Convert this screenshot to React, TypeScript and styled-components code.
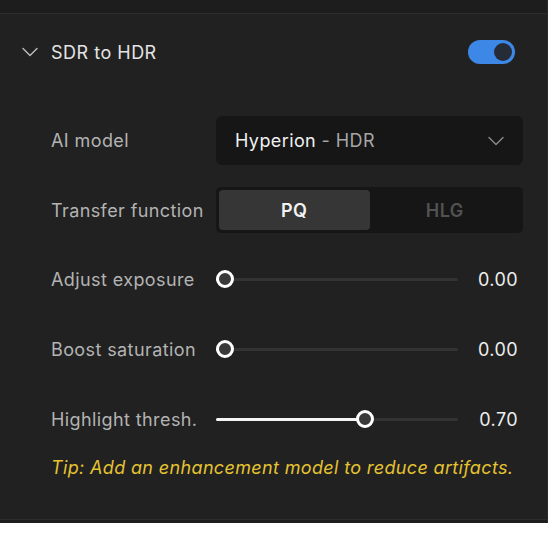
import styled, { createGlobalStyle } from "styled-components";

const GlobalStyle = createGlobalStyle`
  html, body {
    margin: 0;
    padding: 0;
    background: #ffffff;
  }
  body {
    font-family: Inter, "Noto Sans", "Liberation Sans", sans-serif;
  }
`;

type SliderSpec = {
  label: string;
  value: number;
  min: number;
  max: number;
};

const sliders: SliderSpec[] = [
  { label: "Adjust exposure", value: 0, min: 0, max: 1 },
  { label: "Boost saturation", value: 0, min: 0, max: 1 },
  { label: "Highlight thresh.", value: 0.7, min: 0.2, max: 1 },
];

const THUMB = 18;

const App = () => {
  return (
    <>
      <GlobalStyle />
      <Panel>
        <TopStrip />
        <Section>
          <Header>
            <HeaderLeft>
              <Chevron width="16" height="10" viewBox="0 0 16 10" $color="#bdbdbd">
                <path d="M1 1.5 L8 8.5 L15 1.5" />
              </Chevron>
              <Title>SDR to HDR</Title>
            </HeaderLeft>
            <Toggle $on>
              <Knob />
            </Toggle>
          </Header>

          <Rows>
            <Row $h={49}>
              <Label>AI model</Label>
              <Select>
                <SelectText>
                  Hyperion <Muted>- HDR</Muted>
                </SelectText>
                <Chevron width="16" height="10" viewBox="0 0 16 10" $color="#8c8c8c">
                  <path d="M1 1.5 L8 8.5 L15 1.5" />
                </Chevron>
              </Select>
            </Row>

            <Row $h={46}>
              <Label>Transfer function</Label>
              <Segmented>
                <Segment $active>PQ</Segment>
                <Segment>HLG</Segment>
              </Segmented>
            </Row>

            {sliders.map((s) => {
              const frac = (s.value - s.min) / (s.max - s.min);
              return (
                <Row $h={48} key={s.label}>
                  <Label>{s.label}</Label>
                  <SliderLine>
                    <Track>
                      <Fill style={{ width: `calc(${THUMB / 2}px + (100% - ${THUMB}px) * ${frac})` }} />
                      <Thumb style={{ left: `calc((100% - ${THUMB}px) * ${frac})` }} />
                    </Track>
                    <Value>{s.value.toFixed(2)}</Value>
                  </SliderLine>
                </Row>
              );
            })}
          </Rows>

          <Tip>Tip: Add an enhancement model to reduce artifacts.</Tip>
        </Section>
        <BottomStrip />
      </Panel>
    </>
  );
};

export default App;

const Panel = styled.div`
  width: 547px;
  background: #212121;
  border-right: 1px solid #2a2a2a;
  display: flex;
  flex-direction: column;
`;

const TopStrip = styled.div`
  height: 13px;
  background: #1d1d1d;
  border-bottom: 1px solid #2d2d2d;
`;

const BottomStrip = styled.div`
  height: 3px;
  background: #1d1d1d;
  border-top: 1px solid #2d2d2d;
`;

const Section = styled.div`
  padding: 0 24px 0 22px;
  height: 505px;
  box-sizing: border-box;
`;

const Header = styled.div`
  height: 76px;
  display: flex;
  align-items: center;
  justify-content: space-between;
  padding-right: 8px;
`;

const HeaderLeft = styled.div`
  display: flex;
  align-items: center;
  gap: 13px;
`;

const Chevron = styled.svg<{ $color: string }>`
  fill: none;
  stroke: ${({ $color }) => $color};
  stroke-width: 1.4;
  stroke-linecap: round;
  stroke-linejoin: round;
  flex-shrink: 0;
`;

const Title = styled.span`
  font-size: 18px;
  color: #e4e4e4;
  letter-spacing: 0.5px;
`;

const Toggle = styled.div<{ $on?: boolean }>`
  width: 47px;
  height: 24px;
  border-radius: 12px;
  background: ${({ $on }) => ($on ? "#3d88e6" : "#444")};
  display: flex;
  align-items: center;
  justify-content: ${({ $on }) => ($on ? "flex-end" : "flex-start")};
  padding: 0 3px;
  box-sizing: border-box;
`;

const Knob = styled.div`
  width: 18px;
  height: 18px;
  border-radius: 50%;
  background: #252c37;
`;

const Rows = styled.div`
  margin-top: 26px;
  padding-left: 29px;
  display: flex;
  flex-direction: column;
  gap: 22px;
`;

const Row = styled.div<{ $h: number }>`
  height: ${({ $h }) => $h}px;
  display: grid;
  grid-template-columns: 165px 1fr;
  align-items: center;
`;

const Label = styled.span`
  font-size: 18px;
  letter-spacing: 0.4px;
  color: #b3b3b3;
  white-space: nowrap;
`;

const Select = styled.div`
  height: 100%;
  background: #161616;
  border-radius: 6px;
  display: flex;
  align-items: center;
  justify-content: space-between;
  padding: 0 19px 0 19px;
  box-sizing: border-box;
`;

const SelectText = styled.span`
  font-size: 18px;
  letter-spacing: 0.4px;
  color: #f0f0f0;
`;

const Muted = styled.span`
  color: #a6a6a6;
`;

const Segmented = styled.div`
  height: 100%;
  background: #161616;
  border-radius: 5px;
  padding: 3px;
  box-sizing: border-box;
  display: grid;
  grid-template-columns: 1fr 1fr;
`;

const Segment = styled.div<{ $active?: boolean }>`
  display: flex;
  align-items: center;
  justify-content: center;
  border-radius: 4px;
  font-size: 18px;
  letter-spacing: 0.4px;
  font-weight: 600;
  background: ${({ $active }) => ($active ? "#363636" : "transparent")};
  color: ${({ $active }) => ($active ? "#f2f2f2" : "#525252")};
`;

const SliderLine = styled.div`
  display: grid;
  grid-template-columns: 242px 1fr;
  align-items: center;
`;

const Track = styled.div`
  position: relative;
  height: 3px;
  border-radius: 2px;
  background: #333333;
`;

const Fill = styled.div`
  position: absolute;
  left: 0;
  top: 0;
  bottom: 0;
  border-radius: 2px;
  background: #f5f5f5;
`;

const Thumb = styled.div`
  position: absolute;
  top: 50%;
  width: ${THUMB}px;
  height: ${THUMB}px;
  margin-top: -${THUMB / 2}px;
  box-sizing: border-box;
  border-radius: 50%;
  border: 3px solid #ffffff;
  background: #3a3a3a;
`;

const Value = styled.span`
  text-align: right;
  padding-right: 5px;
  font-size: 18px;
  letter-spacing: 0.4px;
  color: #eeeeee;
`;

const Tip = styled.div`
  margin-top: 13px;
  padding-left: 29px;
  font-size: 18px;
  letter-spacing: 0.35px;
  line-height: 24px;
  font-style: italic;
  color: #e6c331;
  white-space: nowrap;
`;
